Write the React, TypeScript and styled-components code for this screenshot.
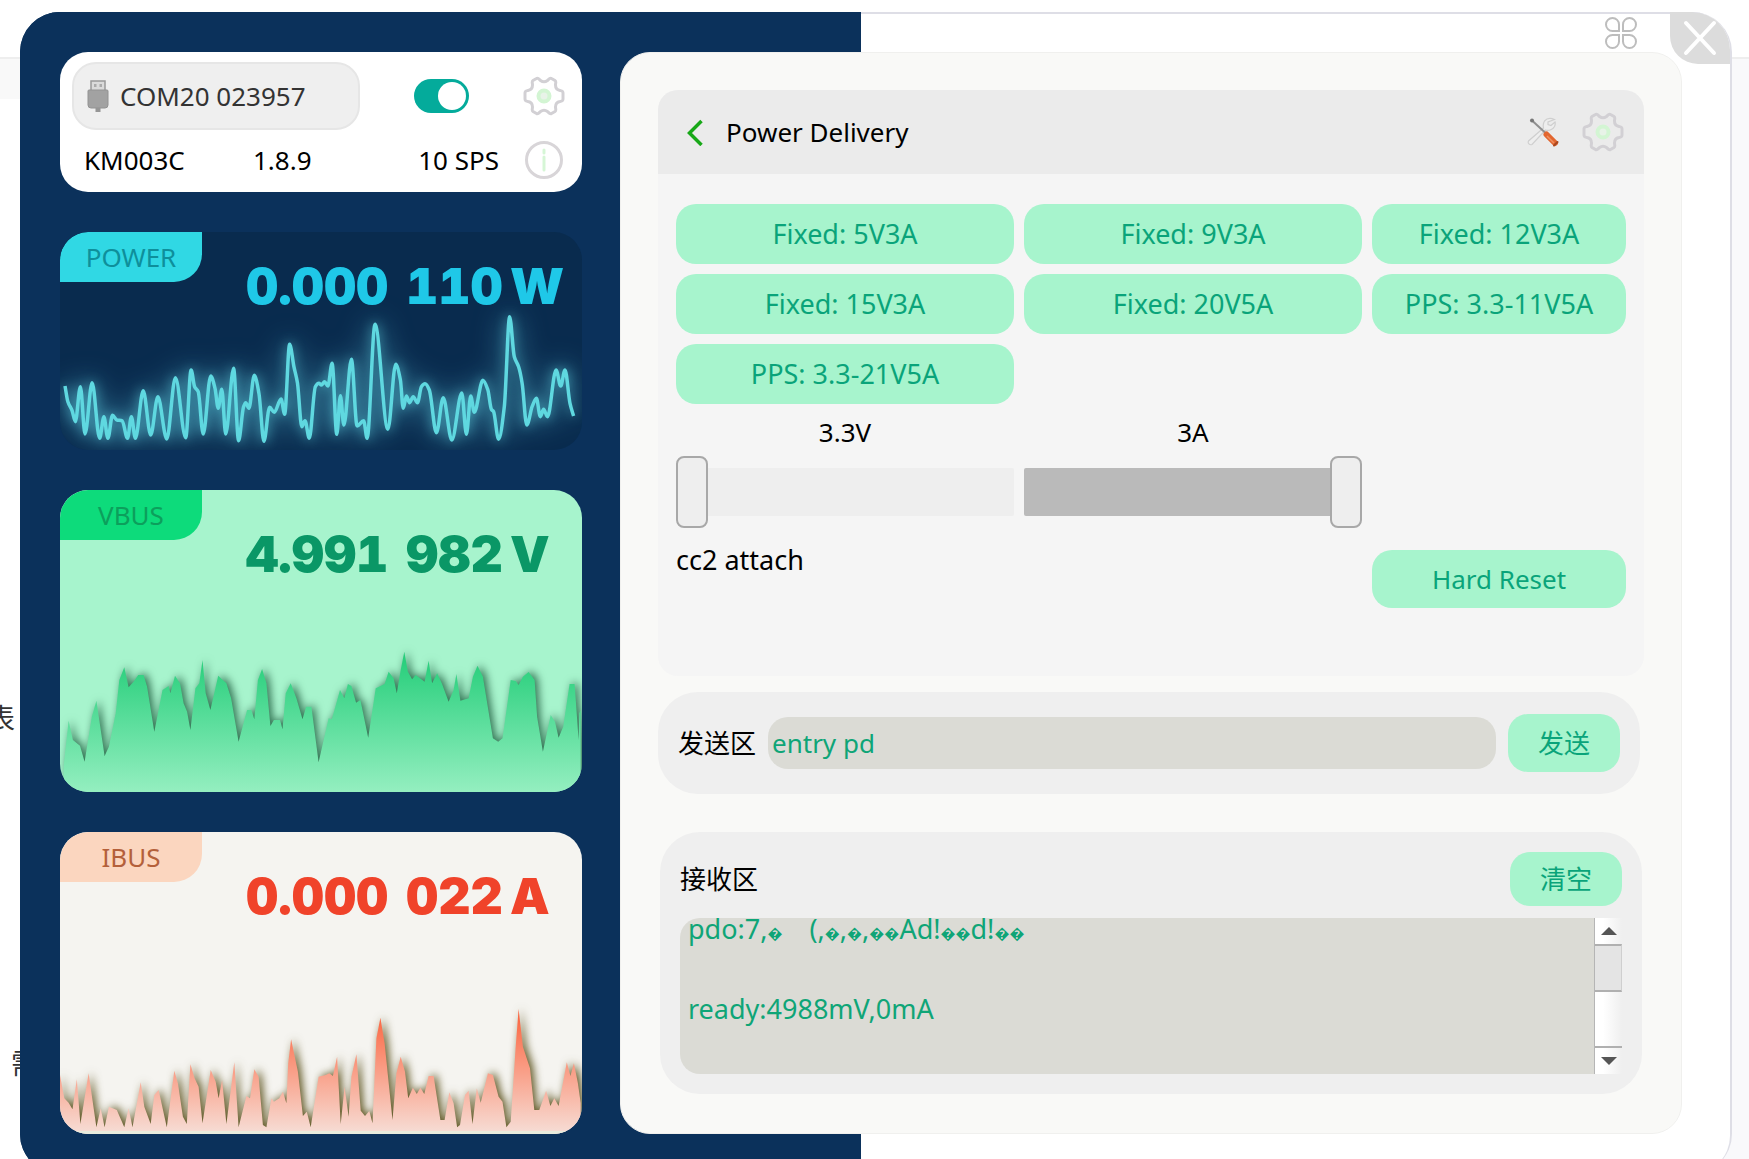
import React, { useEffect, useRef } from "react";
import styled, { createGlobalStyle } from "styled-components";

const GlobalStyle = createGlobalStyle`
  *, *::before, *::after { box-sizing: border-box; }
  body {
    margin: 0;
    background: #ffffff;
    color: #000000;
    font-family: "Noto Sans", "Noto Sans CJK SC", sans-serif;
    font-size: 26px;
    line-height: 32px;
  }
  button, input { font: inherit; margin: 0; }
  button { border: 0; padding: 0; cursor: pointer; background: none; color: inherit; }
  svg { flex: none; }
`;

/* ---------- page and window ---------- */

const Page = styled.div`
  position: relative;
  height: 100vh;
  overflow: hidden;
  padding: 12px 17px 0 20px;
`;

const Backdrop = styled.div`
  position: absolute;
  inset: 0;
  display: flex;
  flex-direction: column;
  padding-top: 57px;
`;

const BackdropBody = styled.div`
  flex: 1;
  display: flex;
  justify-content: space-between;
  border-top: 2px solid #eeeeee;
`;

const BackdropLeft = styled.div`
  width: 40px;
  background: linear-gradient(#f9f9f9 40px, #ffffff 40px);
  display: flex;
  flex-direction: column;
  gap: 305px;
  padding-top: 639px;
  font-size: 28px;
  line-height: 40px;
  color: #333333;
`;

const BackdropWord = styled.span<{ $indent: number }>`
  margin-left: ${(p) => p.$indent}px;
`;

const BackdropRight = styled.div`
  width: 40px;
  background: #f9f9fb;
`;

const Window = styled.main`
  position: relative;
  border-radius: 40px;
  overflow: hidden;
  background: linear-gradient(to right, #0b315b 841px, #dedee6 841px);
`;

const WindowInner = styled.div`
  margin: 0 2px 0 0;
  padding-bottom: 40px;
  background: linear-gradient(to right, #0b315b 841px, #ffffff 841px);
  border-radius: 0 38px 38px 0;
`;

const TopBar = styled.header`
  display: flex;
  justify-content: flex-end;
  align-items: flex-start;
  gap: 33px;
  height: 40px;
  background: linear-gradient(to right, #0b315b 841px, #dedee6 841px) 0 0 / 100% 2px no-repeat;
`;

const AppsButton = styled.button`
  display: flex;
  margin-top: 5px;
`;

const CloseButton = styled.button`
  position: relative;
  z-index: 1;
  width: 60px;
  height: 52px;
  display: flex;
  align-items: center;
  justify-content: center;
  background: #dcdcdc;
  border-radius: 0 38px 0 28px;
`;

const Body = styled.div`
  display: grid;
  grid-template-columns: 522px 1fr;
  gap: 38px;
  padding: 0 48px 0 40px;
`;

/* ---------- left column ---------- */

const Sidebar = styled.aside`
  display: flex;
  flex-direction: column;
  gap: 40px;
`;

const DeviceCard = styled.section`
  height: 140px;
  padding: 10px 17px 0 12px;
  border-radius: 28px;
  background: #ffffff;
`;

const DeviceRow = styled.div`
  display: flex;
  align-items: center;
`;

const PortButton = styled.button`
  display: flex;
  align-items: center;
  gap: 11px;
  width: 288px;
  height: 68px;
  padding-left: 13px;
  border: 2px solid #e6e6e6;
  border-radius: 24px;
  background: #efefef;
  color: #333333;
`;

const Toggle = styled.input`
  appearance: none;
  display: flex;
  align-items: center;
  justify-content: flex-start;
  width: 55px;
  height: 34px;
  margin: 0 auto;
  padding: 3px;
  border-radius: 17px;
  background: #b8b8b8;
  &::before {
    content: "";
    width: 28px;
    height: 28px;
    border-radius: 14px;
    background: #ffffff;
  }
  &:checked {
    background: #04ab9b;
    justify-content: flex-end;
  }
`;

const IconButton = styled.button`
  display: flex;
  align-items: center;
  justify-content: center;
  width: 42px;
  height: 40px;
`;

const DeviceInfo = styled.div`
  display: grid;
  grid-template-columns: 169px 1fr auto 42px;
  align-items: center;
  height: 60px;
  padding-left: 12px;
`;

const Rate = styled.span`
  margin-right: 24px;
`;

const MeterCard = styled.section<{ $bg: string; $height: number }>`
  display: grid;
  height: ${(p) => p.$height}px;
  border-radius: 28px;
  overflow: hidden;
  background: ${(p) => p.$bg};
  > * { grid-area: 1 / 1; }
`;

const MeterHead = styled.div`
  display: flex;
  align-items: flex-start;
  gap: 44px;
`;

const MeterTag = styled.h2<{ $bg: string; $color: string }>`
  margin: 0;
  width: 142px;
  font-size: 26px;
  font-weight: 400;
  line-height: 50px;
  text-align: center;
  border-radius: 28px 0 28px 0;
  background: ${(p) => p.$bg};
  color: ${(p) => p.$color};
`;

const Reading = styled.div<{ $color: string; $top: number }>`
  display: grid;
  grid-template-columns: 160px 104px auto;
  padding-top: ${(p) => p.$top}px;
  font-family: Inter, "Liberation Sans", sans-serif;
  font-size: 50px;
  font-weight: 900;
  line-height: 56px;
  font-variant-numeric: tabular-nums;
  white-space: pre;
  color: ${(p) => p.$color};
`;

const Chart = styled.svg<{ $shadow: string }>`
  width: 100%;
  height: 100%;
  > path { filter: ${(p) => p.$shadow}; }
`;

/* ---------- right column ---------- */

const Panel = styled.section`
  padding: 37px 37px 39px;
  border: 1px solid #f0f0ee;
  border-radius: 30px;
  background: #f9f9f7;
`;

const PdCard = styled.div`
  border-radius: 20px;
  overflow: hidden;
  background: #f5f5f5;
`;

const PdHeader = styled.div`
  display: flex;
  align-items: center;
  height: 84px;
  padding: 0 20px 0 24px;
  background: #ebebeb;
`;

const BackButton = styled.button`
  display: flex;
  width: 28px;
`;

const PdTitle = styled.h1`
  flex: 1;
  margin: 0 0 0 16px;
  font-size: 26px;
  font-weight: 400;
  line-height: 32px;
`;

const HeaderTools = styled.div`
  display: flex;
  gap: 18px;
`;

const PdBody = styled.div`
  padding: 30px 18px 68px;
`;

const PdGrid = styled.div`
  display: grid;
  grid-template-columns: 338fr 338fr 254fr;
  gap: 10px;
`;

const GreenButton = styled.button<{ $height: number; $width?: number }>`
  height: ${(p) => p.$height}px;
  ${(p) => (p.$width ? `width: ${p.$width}px; flex: none;` : "")}
  border-radius: 20px;
  background: #a7f4cd;
  color: #0aa47a;
`;

const ProfileButton = styled(GreenButton)`
  font-size: 27px;
`;

const SliderField = styled.label`
  display: flex;
  flex-direction: column;
  gap: 8px;
  text-align: center;
  padding-top: 12px;
`;

const Slider = styled.input<{ $track: string }>`
  appearance: none;
  width: 100%;
  height: 72px;
  background: transparent;
  &::-webkit-slider-runnable-track {
    height: 48px;
    background: ${(p) => p.$track};
    border-radius: 2px;
  }
  &::-webkit-slider-thumb {
    appearance: none;
    width: 32px;
    height: 72px;
    margin-top: -12px;
    border: 2px solid #a8a8a8;
    border-radius: 8px;
    background: #eeeeee;
  }
`;

const StatusGrid = styled(PdGrid)`
  grid-template-rows: 64px;
  align-items: end;
  padding-top: 16px;
`;

const StatusText = styled.p`
  grid-column: span 2;
  align-self: start;
  margin: 0;
  font-size: 27px;
`;

const SendBar = styled.form`
  display: flex;
  align-items: center;
  height: 102px;
  margin: 16px 4px 0 0;
  padding: 0 20px;
  border-radius: 40px;
  background: #efefef;
`;

const SendInput = styled.input`
  flex: 1;
  min-width: 0;
  height: 52px;
  margin: 0 12px;
  padding: 0 4px;
  border: 0;
  border-radius: 20px;
  background: #dbdbd5;
  color: #0fa577;
`;

const ReceiveBox = styled.div`
  margin: 38px 2px 0;
  padding: 20px;
  border-radius: 40px;
  background: #efefef;
`;

const ReceiveHead = styled.div`
  display: flex;
  align-items: center;
  justify-content: space-between;
  margin-bottom: 12px;
`;

const LogFrame = styled.div`
  display: flex;
  height: 156px;
  border-radius: 20px 0 0 20px;
  overflow: hidden;
`;

const LogText = styled.div`
  flex: 1;
  min-width: 0;
  padding: 0 8px 10px;
  overflow: hidden;
  background: #dbdbd5;
  color: #0fa577;
  font-size: 27px;
  line-height: 40px;
`;

const LogLine = styled.div`
  min-height: 40px;
  white-space: pre;
`;

const BadByte = styled.span`
  font-size: 15px;
  line-height: 1;
`;

const ScrollRail = styled.div`
  display: flex;
  flex-direction: column;
  width: 28px;
  border-left: 1px solid #b5b5b5;
  background: linear-gradient(to right, #ffffff 30%, #efefef);
`;

const ScrollArrow = styled.button`
  display: flex;
  align-items: center;
  justify-content: center;
  height: 26px;
`;

const ScrollThumb = styled.div`
  height: 48px;
  border: 1px solid #cfcfcf;
  border-width: 2px 1px 2px 0;
  border-top-color: #b0b0b0;
  border-bottom-color: #b0b0b0;
  background: #e4e4e4;
`;

const ScrollTrack = styled.div`
  flex: 1;
  border-bottom: 2px solid #b0b0b0;
`;

/* ---------- chart data ---------- */

type Point = [number, number];

const SAMPLE_X = 2.8;
const SAMPLE_Y = 3;

const toPoints = (samples: number[], ox: number, oy: number): Point[] => {
  const out: Point[] = [];
  for (let i = 0; i < samples.length; i += 2) {
    out.push([(samples[i] - ox) / SAMPLE_X, (samples[i + 1] - oy) / SAMPLE_Y]);
  }
  return out;
};

const r = (n: number) => Math.round(n * 10) / 10;

/* Monotone cubic through the points: flat at each peak and valley. */
const smoothPath = (pts: Point[]): string => {
  const slope = (i: number) => (pts[i + 1][1] - pts[i][1]) / (pts[i + 1][0] - pts[i][0]);
  const tangent = pts.map((_, i) => {
    if (i === 0) return slope(0);
    if (i === pts.length - 1) return slope(i - 1);
    const a = slope(i - 1);
    const b = slope(i);
    return a * b <= 0 ? 0 : (2 * a * b) / (a + b);
  });
  let d = `M${r(pts[0][0])} ${r(pts[0][1])}`;
  for (let i = 1; i < pts.length; i++) {
    const [x0, y0] = pts[i - 1];
    const [x1, y1] = pts[i];
    const h = (x1 - x0) / 3;
    d += `C${r(x0 + h)} ${r(y0 + h * tangent[i - 1])} ${r(x1 - h)} ${r(y1 - h * tangent[i])} ${r(x1)} ${r(y1)}`;
  }
  return d;
};

const areaPath = (pts: Point[], base: number): string =>
  `M${r(pts[0][0])} ${base}` +
  pts.map(([x, y]) => `L${r(x)} ${r(y)}`).join("") +
  `L${r(pts[pts.length - 1][0])} ${base}Z`;

const POWER = toPoints([
  70,498,78,545,90,572,99,605,113,500,126,642,146,488,167,655,179,590,190,655,203,586,215,600,230,602,245,655,
  256,590,267,655,289,512,310,645,330,530,355,657,379,473,408,653,423,450,433,500,443,515,457,642,478,468,490,505,
  499,565,509,508,520,642,542,445,556,662,570,560,576,548,585,565,600,466,613,520,627,664,643,562,656,577,675,537,
  685,583,699,373,711,440,721,490,733,620,742,602,754,655,771,500,781,490,788,495,797,485,806,498,818,430,831,643,
  841,527,851,615,872,418,888,618,906,602,916,655,938,313,974,628,996,433,1009,480,1017,565,1026,528,1035,548,
  1045,530,1057,548,1068,500,1078,491,1090,510,1110,638,1129,533,1153,660,1181,519,1194,643,1206,528,1216,577,
  1240,481,1254,510,1264,568,1270,575,1284,658,1300,560,1315,290,1328,410,1340,440,1350,490,1363,615,1378,560,
  1390,535,1401,590,1410,568,1421,590,1445,450,1458,498,1470,450,1484,550,1494,588,
], 56, 36);

const VBUS = toPoints([
  66,860,80,722,92,780,112,797,125,845,145,710,158,662,181,828,193,800,212,700,222,600,236,562,248,622,262,605,
  275,585,290,585,300,620,320,755,343,630,360,618,365,640,378,587,392,610,402,670,412,695,421,750,435,625,446,610,
  455,540,464,640,477,690,492,620,499,587,522,610,535,655,556,785,580,690,592,690,600,718,610,600,622,567,634,610,
  645,738,655,720,672,720,679,748,688,640,702,610,718,655,735,718,745,680,760,680,780,847,808,715,817,718,840,630,
  852,655,862,612,872,618,885,668,897,660,919,773,940,625,965,612,976,575,990,595,999,640,1010,570,1020,515,
  1030,575,1042,598,1052,585,1077,605,1088,542,1098,610,1112,580,1125,610,1144,665,1158,630,1166,582,1177,662,
  1200,655,1212,590,1225,557,1240,590,1268,775,1283,785,1295,775,1318,600,1332,603,1340,615,1352,590,1368,576,
  1385,600,1392,710,1408,815,1430,705,1442,725,1452,773,1465,740,1483,612,1497,612,1508,780,1510,700,1514,690,
], 56, 30);

const IBUS = toPoints([
  56,765,68,835,80,848,91,868,103,778,113,912,136,760,158,922,170,865,181,922,193,860,215,870,236,922,248,865,
  259,922,282,787,292,860,310,912,320,825,332,810,355,922,376,752,386,790,400,890,411,912,421,733,433,775,444,800,
  455,910,478,750,492,785,500,835,510,780,522,912,544,727,556,922,578,828,588,835,600,748,612,770,624,915,634,922,
  648,835,655,845,670,835,680,815,690,850,695,730,703,658,722,755,736,888,747,875,758,922,780,770,800,765,810,760,
  820,768,832,710,842,912,853,800,864,890,872,770,886,703,898,872,910,888,922,873,931,910,942,655,953,593,965,670,
  987,900,998,760,1010,710,1022,755,1031,835,1044,803,1055,822,1065,803,1076,822,1088,768,1102,768,1121,900,
  1133,900,1146,817,1158,850,1168,922,1176,915,1190,825,1200,812,1211,912,1223,805,1234,848,1254,760,1268,765,
  1284,830,1295,845,1306,922,1318,905,1332,680,1340,567,1352,680,1372,745,1384,870,1398,870,1417,812,1429,858,
  1440,835,1452,858,1475,727,1485,768,1495,730,1506,790,1514,850,
], 56, 36);

/* ---------- icons ---------- */

const UsbIcon = () => (
  <svg width="22" height="32" viewBox="0 0 22 32" aria-hidden="true">
    <rect x="4" y="1" width="14" height="11" fill="#dadada" stroke="#999999" strokeWidth="1.5" />
    <rect x="7" y="4" width="2.5" height="3" fill="#aaaaaa" />
    <rect x="12.500" y="4" width="2.500" height="3" fill="#aaaaaa" />
    <path d="M1 11Q1 10 2 10H20Q21 10 21 11V25Q21 28 18 28H4Q1 28 1 25Z" fill="#a2a2a2" stroke="#929292" strokeWidth="1" />
    <rect x="8.500" y="28" width="5" height="4" fill="#969696" />
  </svg>
);

const GearIcon = () => (
  <svg width="42" height="40" viewBox="0 0 42 40" fill="none" aria-hidden="true">
    <path
      d="M13.500 2.500C15 1.500 16 3 17.500 4.500C19.500 6 22.500 6 24.500 4.500C26 3 27 1.500 28.500 2.500L32 4.500C33.500 5.500 32.500 7 32.500 9C32.500 12 34.500 14 37 14.500C39 15 40 15 40 17V23C40 25 39 25 37 25.500C34.500 26 32.500 28 32.500 31C32.500 33 33.500 34.500 32 35.500L28.500 37.500C27 38.500 26 37 24.500 35.500C22.500 34 19.500 34 17.500 35.500C16 37 15 38.500 13.500 37.500L10 35.500C8.500 34.500 9.500 33 9.500 31C9.500 28 7.500 26 5 25.500C3 25 2 25 2 23V17C2 15 3 15 5 14.500C7.500 14 9.500 12 9.500 9C9.500 7 8.500 5.500 10 4.500Z"
      stroke="#d2d0d4"
      strokeWidth="3"
    />
    <circle cx="21" cy="20" r="5.500" fill="#e8f3e8" stroke="#d3f5d3" strokeWidth="4" />
  </svg>
);

const InfoIcon = () => (
  <svg width="40" height="40" viewBox="0 0 40 40" fill="none" aria-hidden="true">
    <circle cx="20" cy="20" r="17.500" stroke="#d8d5d8" strokeWidth="3" />
    <path d="M20 10V13M20 17V30" stroke="#d6f6d6" strokeWidth="3" strokeLinecap="round" />
  </svg>
);

const CloverIcon = () => (
  <svg width="32" height="32" viewBox="0 0 32 32" fill="none" stroke="#bdbdbd" strokeWidth="2" aria-hidden="true">
    <path d="M14 14H7.500A6.500 6.500 0 1 1 14 7.500Z" />
    <path d="M18 14V7.500A6.500 6.500 0 1 1 24.500 14Z" />
    <path d="M14 18V24.500A6.500 6.500 0 1 1 7.500 18Z" />
    <path d="M18 18H24.500A6.500 6.500 0 1 1 18 24.500Z" />
  </svg>
);

const CloseIcon = () => (
  <svg width="36" height="36" viewBox="0 0 36 36" aria-hidden="true">
    <path d="M4 3L32 33M32 3L4 33" stroke="#ffffff" strokeWidth="4" strokeLinecap="round" />
  </svg>
);

const ToolsIcon = () => (
  <svg width="32" height="30" viewBox="0 0 32 30" fill="none" aria-hidden="true">
    <path
      d="M27.500 2.500C24 .8 20 1 17.500 4C16 6.500 16 9 16.500 11L1.500 24C.5 26 2.500 28.500 5 27.500L18.500 13C22 14 26 12.500 27.500 9.500C28.200 8 28.500 6.500 28 5L24 8.500L21 7.500V5Z"
      stroke="#cfcfcf"
      strokeWidth="1.200"
      fill="#eeeeee"
    />
    <path d="M5 3.500L18 15.500" stroke="#8f8f8f" strokeWidth="2" />
    <circle cx="5" cy="3.500" r="2" fill="#777777" />
    <path d="M19.500 17.500L28 26" stroke="#e2662f" strokeWidth="6" strokeLinecap="round" />
    <path d="M20 19L27 26" stroke="#f09060" strokeWidth="1.500" />
    <path d="M27 28.500L30.500 25" stroke="#a84820" strokeWidth="2" strokeLinecap="round" />
  </svg>
);

const BackIcon = () => (
  <svg width="28" height="28" viewBox="0 0 28 28" fill="none" aria-hidden="true">
    <path d="M19.500 3L7.500 15L19.500 27" stroke="#18a818" strokeWidth="3.500" />
  </svg>
);

const ArrowIcon = ({ down }: { down?: boolean }) => (
  <svg width="16" height="8" viewBox="0 0 16 8" aria-hidden="true">
    <path d={down ? "M0 0H16L8 8Z" : "M0 8H16L8 0Z"} fill="#555555" />
  </svg>
);

/* ---------- parts ---------- */

const PROFILES = [
  "Fixed: 5V3A",
  "Fixed: 9V3A",
  "Fixed: 12V3A",
  "Fixed: 15V3A",
  "Fixed: 20V5A",
  "PPS: 3.3-11V5A",
  "PPS: 3.3-21V5A",
];

const LOG = [
  "pdo:7,\uFFFD\u2003(,\uFFFD,\uFFFD,\uFFFD\uFFFDAd!\uFFFD\uFFFDd!\uFFFD\uFFFD",
  "",
  "ready:4988mV,0mA",
  "",
  "",
];

type MeterProps = {
  label: string;
  value: [string, string];
  unit: string;
  height: number;
  top: number;
  bg: string;
  color: string;
  tagBg: string;
  tagColor: string;
  shadow: string;
  children: React.ReactNode;
};

const Meter = (p: MeterProps) => (
  <MeterCard $bg={p.bg} $height={p.height}>
    <Chart viewBox={`0 0 522 ${p.height}`} preserveAspectRatio="none" $shadow={p.shadow} aria-hidden="true">
      {p.children}
    </Chart>
    <MeterHead>
      <MeterTag $bg={p.tagBg} $color={p.tagColor}>{p.label}</MeterTag>
      <Reading $color={p.color} $top={p.top}>
        <span>{p.value[0]}</span>
        <span>{p.value[1]}</span>
        <span>{p.unit}</span>
      </Reading>
    </MeterHead>
  </MeterCard>
);

const Log = () => {
  const ref = useRef<HTMLDivElement>(null);
  useEffect(() => {
    if (ref.current) ref.current.scrollTop = 9;
  }, []);
  const scroll = (by: number) => () => ref.current?.scrollBy(0, by);
  return (
    <LogFrame>
      <LogText ref={ref} role="log" aria-labelledby="log-title" tabIndex={0}>
        {LOG.map((line, i) => (
          <LogLine key={i}>
            {line.split(/(\uFFFD+)/).map((part, j) =>
              part.startsWith("\uFFFD") ? <BadByte key={j}>{part}</BadByte> : part
            )}
          </LogLine>
        ))}
      </LogText>
      <ScrollRail>
        <ScrollArrow type="button" aria-label="Scroll up" onClick={scroll(-40)}><ArrowIcon /></ScrollArrow>
        <ScrollThumb />
        <ScrollTrack />
        <ScrollArrow type="button" aria-label="Scroll down" onClick={scroll(40)}><ArrowIcon down /></ScrollArrow>
      </ScrollRail>
    </LogFrame>
  );
};

export default function App() {
  return (
    <Page>
      <GlobalStyle />
      <Backdrop>
        <BackdropBody>
          <BackdropLeft>
            <BackdropWord $indent={-13}>表</BackdropWord>
            <BackdropWord $indent={11}>需</BackdropWord>
          </BackdropLeft>
          <BackdropRight />
        </BackdropBody>
      </Backdrop>
      <Window>
        <WindowInner>
          <TopBar>
            <AppsButton aria-label="Apps"><CloverIcon /></AppsButton>
            <CloseButton aria-label="Close"><CloseIcon /></CloseButton>
          </TopBar>
          <Body>
            <Sidebar>
              <DeviceCard>
                <DeviceRow>
                  <PortButton><UsbIcon />COM20 023957</PortButton>
                  <Toggle type="checkbox" defaultChecked aria-label="Connect" />
                  <IconButton aria-label="Device settings"><GearIcon /></IconButton>
                </DeviceRow>
                <DeviceInfo>
                  <span>KM003C</span>
                  <span>1.8.9</span>
                  <Rate>10 SPS</Rate>
                  <IconButton aria-label="Device info"><InfoIcon /></IconButton>
                </DeviceInfo>
              </DeviceCard>

              <Meter
                label="POWER" value={["0.000 ", "110"]} unit="W" height={218} top={26}
                bg="#092b4e" color="#1fc8e8" tagBg="#30d8e4" tagColor="#0e8f9b"
                shadow="drop-shadow(0 0 6px rgba(95, 215, 225, 0.6)) drop-shadow(0 0 14px rgba(95, 200, 225, 0.7))"
              >
                <path d={smoothPath(POWER)} fill="none" stroke="#5fd8e0" strokeWidth="3.500" strokeLinejoin="round" />
              </Meter>

              <Meter
                label="VBUS" value={["4.991 ", "982"]} unit="V" height={302} top={36}
                bg="#a7f4cd" color="#0a9766" tagBg="#0ddb7b" tagColor="#0c9f5c"
                shadow="drop-shadow(3px -1px 4px rgba(10, 70, 40, 0.75))"
              >
                <defs>
                  <linearGradient id="vbus-fill" x1="0" y1="0" x2="0" y2="1">
                    <stop offset="0" stopColor="#22cd78" />
                    <stop offset="1" stopColor="#99f0c3" />
                  </linearGradient>
                </defs>
                <path d={areaPath(VBUS, 308)} fill="url(#vbus-fill)" />
              </Meter>

              <Meter
                label="IBUS" value={["0.000 ", "022"]} unit="A" height={302} top={36}
                bg="#f5f4f0" color="#f0432a" tagBg="#fbd6bf" tagColor="#b4603a"
                shadow="drop-shadow(3px -1px 4px rgba(70, 60, 0, 0.85))"
              >
                <defs>
                  <linearGradient id="ibus-fill" x1="0" y1="0" x2="0" y2="1">
                    <stop offset="0" stopColor="#fc6039" />
                    <stop offset="1" stopColor="#f6e4de" />
                  </linearGradient>
                </defs>
                <path d={areaPath(IBUS, 308)} fill="url(#ibus-fill)" />
                <rect x="0" y="299" width="522" height="3" fill="#e8ebdd" />
              </Meter>
            </Sidebar>

            <Panel>
              <PdCard>
                <PdHeader>
                  <BackButton aria-label="Back"><BackIcon /></BackButton>
                  <PdTitle>Power Delivery</PdTitle>
                  <HeaderTools>
                    <IconButton aria-label="Tools"><ToolsIcon /></IconButton>
                    <IconButton aria-label="Settings"><GearIcon /></IconButton>
                  </HeaderTools>
                </PdHeader>
                <PdBody>
                  <PdGrid>
                    {PROFILES.map((name) => (
                      <ProfileButton key={name} type="button" $height={60}>{name}</ProfileButton>
                    ))}
                  </PdGrid>
                  <PdGrid>
                    <SliderField>
                      3.3V
                      <Slider type="range" min={3.3} max={21} step={0.1} defaultValue={3.3} $track="#eeeeee" />
                    </SliderField>
                    <SliderField>
                      3A
                      <Slider type="range" min={0} max={3} step={0.1} defaultValue={3} $track="#bababa" />
                    </SliderField>
                  </PdGrid>
                  <StatusGrid>
                    <StatusText>cc2 attach</StatusText>
                    <GreenButton type="button" $height={58}>Hard Reset</GreenButton>
                  </StatusGrid>
                </PdBody>
              </PdCard>

              <SendBar onSubmit={(e) => e.preventDefault()}>
                <label htmlFor="send">发送区</label>
                <SendInput id="send" type="text" defaultValue="entry pd" />
                <GreenButton type="submit" $height={58} $width={112}>发送</GreenButton>
              </SendBar>

              <ReceiveBox>
                <ReceiveHead>
                  <span id="log-title">接收区</span>
                  <GreenButton type="button" $height={54} $width={112}>清空</GreenButton>
                </ReceiveHead>
                <Log />
              </ReceiveBox>
            </Panel>
          </Body>
        </WindowInner>
      </Window>
    </Page>
  );
}
